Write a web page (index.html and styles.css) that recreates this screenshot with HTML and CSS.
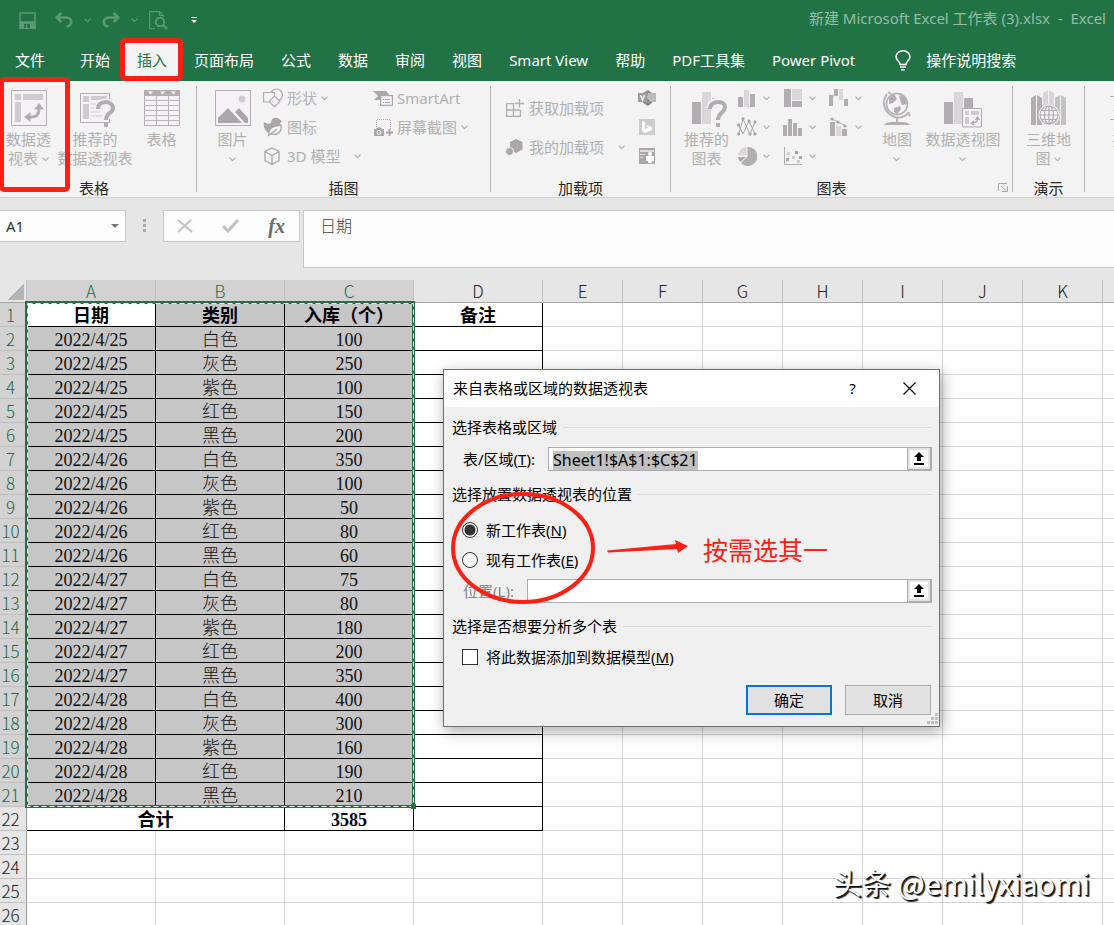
FILE: index.html
```html
<!DOCTYPE html>
<html lang="zh-CN">
<head>
    <meta charset="UTF-8">
    <title>新建 Microsoft Excel 工作表 (3).xlsx - Excel</title>
    <link rel="stylesheet" href="styles.css">
</head>
<body>
<svg class="defs" width="0" height="0">
    <symbol id="chev" viewBox="0 0 7 5"><path d="M.5 .7L3.5 3.7L6.5 .7" fill="none" stroke="currentColor" stroke-width="1.2"/></symbol>
    <symbol id="pick" viewBox="0 0 10 13"><path d="M5 0L10 5H7V9H3V5H0zM0 11H10V13H0z"/></symbol>
</svg>
<div class="titlebar">
    <div class="quick">
        <button aria-label="保存"><svg width="17" height="17" viewBox="0 0 17 17" fill="none" stroke="currentColor" stroke-width="1.5"><path d="M1 1H16V16H1z"/><path d="M1 10H16V16H1z" fill="currentColor"/><path d="M5 12H11V16H5z" fill="#217346" stroke="none"/><path d="M7.500 12.500V16"/></svg></button>
        <button aria-label="撤消"><svg width="18" height="16" viewBox="0 0 18 16" fill="none" stroke="currentColor" stroke-width="2.500"><path d="M6.500 1L1.500 5.500L6.500 10M2 5.500H11C18 5.500 18 14 11.500 14.500"/></svg></button>
        <svg class="chev" width="7" height="5"><use href="#chev"/></svg>
        <button aria-label="恢复"><svg width="18" height="16" viewBox="0 0 18 16" fill="none" stroke="currentColor" stroke-width="2.500"><path d="M11.500 1L16.500 5.500L11.500 10M16 5.500H7C0 5.500 0 14 6.500 14.500"/></svg></button>
        <svg class="chev" width="7" height="5"><use href="#chev"/></svg>
        <button aria-label="打印预览"><svg width="19" height="19" viewBox="0 0 19 19" fill="none" stroke="currentColor" stroke-width="1.200"><path d="M6 17.500H.7V.7H10.500L14.300 4.500V6M10.500 .7V4.500H14.300"/><circle cx="11" cy="11" r="4.200" stroke-width="2"/><path d="M14 14L18 18" stroke-width="2.400"/></svg></button>
        <button class="more" aria-label="自定义"><svg width="6" height="7" viewBox="0 0 6 7" fill="#fff"><path d="M0 0H6V1H0zM0 3H6L3 6z"/></svg></button>
    </div>
    <div class="doc">新建 Microsoft Excel 工作表 (3).xlsx &nbsp;-&nbsp; Excel</div>
</div>
<nav class="tabs">
    <button class="file">文件</button>
    <button>开始</button>
    <button class="on">插入</button>
    <button>页面布局</button>
    <button>公式</button>
    <button>数据</button>
    <button>审阅</button>
    <button>视图</button>
    <button>Smart View</button>
    <button>帮助</button>
    <button>PDF工具集</button>
    <button>Power Pivot</button>
    <button class="tell"><svg width="16" height="21" viewBox="0 0 16 21" fill="none" stroke="#fff" stroke-width="1.500"><path d="M5 14.500C5 11.500 1 10.500 1 6.800A7 6 0 0 1 15 6.800C15 10.500 11 11.500 11 14.500zM5 17H11M6 19.800H10"/></svg>操作说明搜索</button>
</nav>
<div class="ribbon">
    <section class="group g-table">
        <div class="body">
            <button class="big pivot">
                <svg width="36" height="36" viewBox="0 0 36 36"><path d="M.5 .5H35.500V35.500H.5z" fill="#f5f1f6" stroke="#b1adb1"/><path d="M4 4H10V10H4zM12 4H32V10H12zM4 12H10V32H4z" fill="#cfccd0"/><path d="M16.500 27H21C26 27 28 23 28 18" fill="none" stroke="#b1adb1" stroke-width="3"/><path d="M28 13L33 19.500H23zM13 27L19.500 22V32z" fill="#b1adb1"/></svg>
                <span>数据透<br>视表 <svg class="chev" width="7" height="5"><use href="#chev"/></svg></span>
            </button>
            <button class="big wide">
                <svg width="30" height="36" viewBox="0 0 30 36"><path d="M.5 3.500H29.500V32.500H.5z" fill="#f5f1f6" stroke="#b1adb1"/><path d="M3 6H9V12H3zM11 6H27V10H11zM3 14H9V29H3z" fill="#cfccd0"/><path d="M11 14H27M11 18H23M11 22H20M11 26H22" stroke="#cfccd0"/><path d="M18 19C18 10 33 10 33 18C33 24 26 22 26 29" fill="none" stroke="#f3f3f3" stroke-width="7"/><path d="M18 19C18 10 33 10 33 18C33 24 26 22 26 30M26 33V37" fill="none" stroke="#b1adb1" stroke-width="4"/></svg>
                <span>推荐的<br>数据透视表</span>
            </button>
            <button class="big">
                <svg width="36" height="36" viewBox="0 0 36 36"><path d="M.5 .5H35.500V35.500H.5z" fill="#f5f1f6" stroke="#b1adb1"/><path d="M0 0H36V6H0z" fill="#b1adb1"/><path d="M4 1.500H9L6.500 4.500zM16 1.500H21L18.500 4.500zM27 1.500H32L29.500 4.500z" fill="#fff"/><path d="M12.500 6V35M24.500 6V35M0 10.500H36M0 15.500H36M0 20.500H36M0 25.500H36M0 30.500H36" stroke="#b8b4b8" fill="none"/></svg>
                <span>表格</span>
            </button>
        </div>
        <h2>表格</h2>
        <i class="mark mark-pivot"></i>
    </section>
    <section class="group g-pic">
        <div class="body">
            <button class="big">
                <svg width="36" height="36" viewBox="0 0 36 36"><path d="M.5 .5H35.500V35.500H.5z" fill="#f5f1f6" stroke="#b1adb1"/><circle cx="27" cy="9" r="3.500" fill="#cfccd0"/><path d="M3 33V28L13 18L27 33zM20 22L24 18L33 28V33H30z" fill="#aaa6aa"/></svg>
                <span>图片<br><svg class="chev" width="7" height="5"><use href="#chev"/></svg></span>
            </button>
            <div class="list shapes">
                <button><svg width="20" height="20" viewBox="0 0 20 20" fill="#f5f1f6" stroke="#b1adb1" stroke-width="1.200"><circle cx="13.500" cy="7" r="6"/><path d="M.6 4.500H11.500V14H.6z"/><path d="M11.500 8L17 13.500L11.500 19L6 13.500z"/></svg>形状 <svg class="chev" width="7" height="5"><use href="#chev"/></svg></button>
                <button><svg width="20" height="20" viewBox="0 0 20 20" fill="#aaa6aa"><path d="M1 5C4 7 6 7 8 6C8 2 11 0 14 1C16 1 17 3 19 4C17 6 17 8 14 9C9 10 8 15 6 16C2 14 0 10 1 5z"/><path d="M6 18C5 11 10 9 18 8C19 14 15 19 8 17M5 19L14 12" fill="#f5f1f6" stroke="#aaa6aa" stroke-width="1.300"/></svg>图标</button>
                <button><svg width="20" height="20" viewBox="0 0 20 20" fill="#f5f1f6" stroke="#aaa6aa" stroke-width="1.300"><path d="M9 2L16 5.500V14.500L9 18.500L2 14.500V5.500zM2 5.500L9 9.500L16 5.500M9 9.500V18.500"/></svg>3D 模型 <svg class="chev far" width="7" height="5"><use href="#chev"/></svg></button>
            </div>
            <div class="list">
                <button><svg width="20" height="20" viewBox="0 0 20 20"><path d="M0 3H13L17 8H7V12H1L5 8z" fill="#aaa6aa"/><path d="M7.600 7.600H19.400V17.400H7.600z" fill="#f5f1f6" stroke="#aaa6aa" stroke-width="1.200"/><path d="M10 11.500H11M12 11.500H17M10 14.500H11M12 14.500H17" stroke="#aaa6aa"/></svg>SmartArt</button>
                <button><svg width="20" height="20" viewBox="0 0 20 20"><path d="M3.500 10V2.500H17.500V12" fill="#f5f1f6" stroke="#b1adb1" stroke-dasharray="1 1"/><path d="M1 12H3L4 10.500H8L9 12H11V19H1zM15.500 12H17.500V14.500H20V16.500H17.500V19H15.500V16.500H13V14.500H15.500z" fill="#aaa6aa"/><circle cx="6" cy="15.300" r="2" fill="none" stroke="#fff"/></svg>屏幕截图 <svg class="chev" width="7" height="5"><use href="#chev"/></svg></button>
            </div>
        </div>
        <h2>插图</h2>
    </section>
    <section class="group g-addin">
        <div class="body">
            <div class="list addins">
                <button><svg width="20" height="20" viewBox="0 0 20 20" fill="none" stroke="#b1adb1" stroke-width="1.300"><path d="M1.600 5.600H8.500V19M1.600 5.600V18.400H15.400V12M1.600 12H15.400M14.500 1V9.500M10 5.500H19"/></svg>获取加载项</button>
                <button><svg width="20" height="20" viewBox="0 0 20 20" fill="#aaa6aa"><path d="M11 2L17.500 5V12.500L11 16L5 12.500V5z"/><circle cx="4.500" cy="14.500" r="4" stroke="#f3f3f3"/></svg>我的加载项 <svg class="chev far" width="7" height="5"><use href="#chev"/></svg></button>
            </div>
            <div class="list apps">
                <button aria-label="Visio"><svg width="18" height="18" viewBox="0 0 18 18"><path d="M5 4L10 1L14 4V14L10 17L5 14z" fill="#8f8c8f"/><path d="M10 4H18V13H13L9 9z" fill="#bdbabd"/><path d="M0 4H9V13H0z" fill="#a19ea1"/><path d="M2.500 6L4.500 11L6.500 6" fill="none" stroke="#fff" stroke-width="1.300"/></svg></button>
                <button aria-label="Bing"><svg width="18" height="18" viewBox="0 0 18 18"><path d="M1 1H17V17H1z" fill="#cfccd0"/><path d="M4 3L7 4V11L10 10L8 7L14 9V12L7 15L4 13z" fill="#fff"/></svg></button>
                <button aria-label="People"><svg width="18" height="18" viewBox="0 0 18 18"><path d="M1 1H17V17H1z" fill="#aaa6aa"/><path d="M2 3H16V5H2zM2 7H7V8H2zM2 10H5V11H2z" fill="#ddd"/><circle cx="12" cy="7" r="2" fill="#fff"/><path d="M8 9H16V14H14V16H10V14H8z" fill="#fff"/></svg></button>
            </div>
        </div>
        <h2>加载项</h2>
    </section>
    <section class="group g-chart">
        <div class="body">
            <button class="big">
                <svg width="30" height="36" viewBox="0 0 30 36"><path d="M0 12H9V34H0z" fill="#b1adb1"/><path d="M10 2H19V34H10z" fill="#d9d6da"/><path d="M20 8H29V14H20z" fill="#b1adb1"/><path d="M18 18C18 9 33 9 33 17C33 23 26 22 26 29" fill="none" stroke="#f3f3f3" stroke-width="7"/><path d="M18 19C18 10 33 10 33 17C33 23 26 22 26 30M26 33V37" fill="none" stroke="#b1adb1" stroke-width="4"/></svg>
                <span>推荐的<br>图表</span>
            </button>
            <div class="charts">
                <button aria-label="柱形图"><svg width="20" height="20" viewBox="0 0 20 20"><path d="M1 9H6V19H1zM13 6H18V19H13z" fill="#b1adb1"/><path d="M7 2H12V19H7z" fill="#d9d6da"/></svg><svg class="chev" width="7" height="5"><use href="#chev"/></svg></button>
                <button aria-label="层次结构"><svg width="20" height="20" viewBox="0 0 20 20"><path d="M1 1H8V19H1zM9 13H19V19H9z" fill="#b1adb1"/><path d="M9 1H19V12H9z" fill="#d9d6da"/></svg><svg class="chev" width="7" height="5"><use href="#chev"/></svg></button>
                <button aria-label="瀑布图"><svg width="20" height="20" viewBox="0 0 20 20"><path d="M0 7H4V18H0zM5 1H9V8H5zM15 11H19V18H15z" fill="#b1adb1"/><path d="M10 1H14V12H10zM4 7H5V9H4z" fill="#d9d6da"/></svg><svg class="chev" width="7" height="5"><use href="#chev"/></svg></button>
                <button aria-label="折线图"><svg width="20" height="20" viewBox="0 0 20 20" fill="#aaa6aa" stroke="#aaa6aa"><path d="M1.500 18L6 2L13 17L18 5M1.500 8L6 17L12 4L18 17" fill="none"/><circle cx="1.500" cy="8" r="1.200"/><circle cx="6" cy="2" r="1.200"/><circle cx="18" cy="5" r="1.200"/><circle cx="12" cy="4" r="1.200"/><circle cx="1.500" cy="17" r="1.200"/><circle cx="13" cy="17" r="1.200"/><circle cx="18" cy="17" r="1.200"/></svg><svg class="chev" width="7" height="5"><use href="#chev"/></svg></button>
                <button aria-label="统计图"><svg width="20" height="20" viewBox="0 0 20 20"><path d="M0 8H4V19H0zM5 2H9V19H5zM10 6H14V19H10zM15 11H19V19H15z" fill="#b1adb1"/></svg><svg class="chev" width="7" height="5"><use href="#chev"/></svg></button>
                <button aria-label="组合图"><svg width="20" height="20" viewBox="0 0 20 20"><path d="M1 5H6V19H1zM13 12H18V19H13z" fill="#b1adb1"/><path d="M7 9H12V19H7z" fill="#d9d6da"/><path d="M3 2L9 5L17 9" fill="none" stroke="#aaa6aa"/><circle cx="3" cy="2" r="1.600" fill="#aaa6aa"/><circle cx="9" cy="5" r="1.600" fill="#aaa6aa"/><circle cx="16" cy="9" r="1.600" fill="#aaa6aa"/></svg><svg class="chev" width="7" height="5"><use href="#chev"/></svg></button>
                <button aria-label="饼图"><svg width="20" height="20" viewBox="0 0 20 20"><path d="M10.500 1A9.500 9.500 0 1 1 4 17L10.500 10.500z" fill="#b1adb1"/><path d="M9.500 1V9.500H1A9 9 0 0 1 9.500 1z" fill="#d9d6da"/><path d="M1 11H9L3.500 16A8 8 0 0 1 1 11z" fill="#aaa6aa"/></svg><svg class="chev" width="7" height="5"><use href="#chev"/></svg></button>
                <button aria-label="散点图"><svg width="20" height="20" viewBox="0 0 20 20"><path d="M1.500 1V18.500H19" fill="none" stroke="#b1adb1"/><path d="M12 5H15V8H12zM16 10H19V13H16zM3 12H6V15H3z" fill="#aaa6aa"/><path d="M4 6H7V9H4zM9 10H12V13H9zM14 14H17V17H14z" fill="#d0cdd1"/></svg><svg class="chev" width="7" height="5"><use href="#chev"/></svg></button>
            </div>
            <button class="big map">
                <svg width="30" height="36" viewBox="0 0 30 36"><circle cx="15" cy="14" r="10.500" fill="#f5f1f6" stroke="#b1adb1" stroke-width="1.500"/><path d="M7 8L12 4L15 9L11 13L7 14zM17 5L23 7L25 14L20 15L18 10zM12 18L18 16L19 19L15 24L12 22z" fill="#b1adb1"/><path d="M6 2L9 4M5 4C-1 12 2 24 14 27.500C20 28 24 26 26 23M26 22L28 26M15 28V32" fill="none" stroke="#b8b4b8" stroke-width="2"/><path d="M2 35Q4 32 10 32H20Q26 32 28 35z" fill="#b1adb1"/></svg>
                <span>地图<br><svg class="chev" width="7" height="5"><use href="#chev"/></svg></span>
            </button>
            <button class="big wide">
                <svg width="38" height="36" viewBox="0 0 38 36"><path d="M0 12H9V34H0zM20 8H29V18H20z" fill="#b1adb1"/><path d="M10 2H19V34H10z" fill="#d9d6da"/><path d="M18.500 18.500H37.500V37H18.500z" fill="#f5f1f6" stroke="#b1adb1"/><path d="M21 21H25V25H21zM27 21H35V25H27zM21 27H25V34H21z" fill="#cfccd0"/><path d="M28 33Q34 33 33.500 28M31.500 30L33.500 27L35.500 30M30 31L27.500 33L30 35" fill="none" stroke="#aaa6aa" stroke-width="1.300"/></svg>
                <span>数据透视图<br><svg class="chev" width="7" height="5"><use href="#chev"/></svg></span>
            </button>
        </div>
        <h2>图表</h2>
        <button class="launch" aria-label="查看所有图表"><svg width="10" height="9" viewBox="0 0 10 9" fill="none" stroke="#a5a5a5"><path d="M.5 8V.5H9M3 3L8 7.500M9.500 3V8.500H4"/></svg></button>
    </section>
    <section class="group g-demo">
        <div class="body">
            <button class="big">
                <svg width="36" height="36" viewBox="0 0 36 36"><path d="M0 8L5 5V35H0zM6 5L11 8V35H6z" fill="#b1adb1"/><path d="M12 3L17 0V35H12zM18 0L23 3V35H18z" fill="#d9d6da"/><path d="M24 8L29 5V35H24zM30 5L35 8V35H30z" fill="#c4c1c5"/><circle cx="18" cy="25" r="10.500" fill="#f5f1f6"/><g fill="none" stroke="#b1adb1" stroke-width="1.200"><circle cx="18" cy="25" r="9"/><ellipse cx="18" cy="25" rx="4.500" ry="9"/><path d="M18 16V34M9 25H27M10.500 20.500H25.500M10.500 29.500H25.500"/></g></svg>
                <span>三维地<br>图 <svg class="chev" width="7" height="5"><use href="#chev"/></svg></span>
            </button>
        </div>
        <h2>演示</h2>
    </section>
    <section class="group g-spark">
        <div class="body">
            <button class="big">
                <svg width="36" height="36" viewBox="0 0 36 36" fill="none" stroke="#b1adb1"><path d="M4.500 1V35M0 6.500H36M0 29.500H36"/><path d="M4 20L10 25L17 14L24 22L33 10" stroke-width="2"/></svg>
                <span>折线</span>
            </button>
        </div>
    </section>
</div>
<div class="formula">
    <label class="namebox"><input type="text" value="A1" aria-label="名称框"><svg width="8" height="4" viewBox="0 0 8 4"><path d="M0 0H8L4 4z" fill="#777"/></svg></label>
    <svg class="dots" width="3" height="13" viewBox="0 0 3 13"><path d="M0 0H3V3H0zM0 5H3V8H0zM0 10H3V13H0z" fill="#a9a9a9"/></svg>
    <div class="fx">
        <button aria-label="取消"><svg width="16" height="14" viewBox="0 0 16 14" fill="none" stroke="#c2c2c2" stroke-width="2"><path d="M1 1L15 13M14 1L1 13"/></svg></button>
        <button aria-label="输入"><svg width="17" height="14" viewBox="0 0 17 14" fill="none" stroke="#c2c2c2" stroke-width="3"><path d="M1 7L6 12L16 1"/></svg></button>
        <button class="fn" aria-label="插入函数">fx</button>
    </div>
    <textarea aria-label="编辑栏">日期</textarea>
</div>
<div class="sheet">
    <div class="area">
        <table id="grid"></table>
        <svg class="ants" width="391" height="508" viewBox="0 0 391 508" fill="none">
            <path d="M1.500 1.500H388.500V505.500H1.500z" stroke="#217346" stroke-width="3"/>
            <path d="M2.500 2.500H388.500V505.500H2.500z" stroke="#fff" stroke-dasharray="5 3"/>
            <path d="M386 503H391V508H386z" fill="#217346"/>
        </svg>
    </div>
</div>
<form class="dialog">
    <header>
        <span>来自表格或区域的数据透视表</span>
        <button type="button" aria-label="帮助">?</button>
        <button type="button" aria-label="关闭"><svg width="13" height="13" viewBox="0 0 13 13" stroke="#000" stroke-width="1.200"><path d="M.5 .5L12.500 12.500M12.500 .5L.5 12.500"/></svg></button>
    </header>
    <div class="content">
        <h3>选择表格或区域</h3>
        <div class="field">
            <label for="range">表/区域(<u>T</u>):</label>
            <input type="text" id="range" value="Sheet1!$A$1:$C$21">
            <button type="button" aria-label="选择区域"><svg width="10" height="13"><use href="#pick"/></svg></button>
        </div>
        <h3>选择放置数据透视表的位置</h3>
        <label class="opt"><input type="radio" name="place" checked>新工作表(<u>N</u>)</label>
        <label class="opt"><input type="radio" name="place">现有工作表(<u>E</u>)</label>
        <div class="field off">
            <label for="place">位置(<u>L</u>):</label>
            <input type="text" id="place">
            <button type="button" aria-label="选择位置"><svg width="10" height="13"><use href="#pick"/></svg></button>
        </div>
        <h3>选择是否想要分析多个表</h3>
        <label class="opt"><input type="checkbox">将此数据添加到数据模型(<u>M</u>)</label>
        <div class="btns">
            <button type="submit" class="ok">确定</button>
            <button type="button">取消</button>
        </div>
    </div>
    <svg class="grip" width="11" height="11" viewBox="0 0 11 11" fill="#bfbfbf"><path d="M8 0H11V3H8zM4 4H7V7H4zM8 4H11V7H8zM0 8H3V11H0zM4 8H7V11H4zM8 8H11V11H8z"/></svg>
    <svg class="draw" width="240" height="116" viewBox="0 0 240 116">
        <ellipse cx="73" cy="58" rx="70" ry="54" fill="none" stroke="#ff2013" stroke-width="4"/>
        <path d="M157 60.500L226 54L225 50L238 56L228 63L227 59L158 62.500z" fill="#ff2013"/>
    </svg>
    <span class="note">按需选其一</span>
</form>
<div class="sign">头条 @emilyxiaomi</div>
<script src="script.js"></script>
</body>
</html>
```
FILE: styles.css
```css
*{
    margin: 0;
    padding: 0;
    box-sizing: border-box;
}
body{
    position: relative;
    display: flex;
    flex-direction: column;
    height: 100vh;
    overflow: hidden;
    font: 15px/19px "Noto Sans", "Noto Sans CJK SC", sans-serif;
    background: #e6e6e6;
}
button,input,textarea{
    font: inherit;
    color: inherit;
    border: 0;
    background: none;
    outline: none;
}
.defs{
    position: absolute;
}
.titlebar{
    flex: none;
    display: flex;
    justify-content: space-between;
    align-items: center;
    height: 40px;
    padding: 0 8px 0 19px;
    background: #217346;
    color: #5b9877;
}
.quick{
    display: flex;
    align-items: center;
    gap: 11px;
}
.quick button{
    display: flex;
}
.quick button:first-child{
    margin-right: 8px;
}
.quick .more{
    margin-left: 12px;
}
.doc{
    padding-bottom: 3px;
    color: #95bda5;
    white-space: nowrap;
}
.tabs{
    flex: none;
    display: flex;
    gap: 3px;
    height: 41px;
    padding: 3px 0 0 3px;
    background: #217346;
    color: #fff;
}
.tabs button{
    flex: none;
    padding: 0 12px 3px;
    white-space: nowrap;
}
.tabs .file{
    margin-right: 8px;
}
.tabs .on{
    position: relative;
    background: #f3f3f3;
    color: #217346;
}
.tabs .on::after,.mark{
    content: "";
    position: absolute;
    border: 5px solid #ff2013;
    border-radius: 5px;
}
.tabs .on::after{
    left: -5px;
    right: -4px;
    top: -5px;
    bottom: 0;
}
.tabs .tell{
    display: flex;
    align-items: center;
    gap: 15px;
    margin-left: 13px;
}
.ribbon{
    flex: none;
    display: flex;
    height: 117px;
    padding: 5px 0;
    background: #f3f3f3;
    border-bottom: 1px solid #d2d2d2;
    color: #b1b1b1;
}
.group{
    position: relative;
    flex: none;
    display: flex;
    flex-direction: column;
    border-right: 1px solid #b4b4b4;
}
.g-table{ width: 197px; }
.g-pic{ width: 294px; }
.g-addin{ width: 180px; }
.g-chart{ width: 342px; }
.g-demo{ width: 72px; }
.g-spark{ border: 0; padding-left: 14px; }
.group h2{
    font-size: 15px;
    line-height: 20px;
    font-weight: normal;
    text-align: center;
    color: #262626;
}
.g-table h2{
    padding-right: 8px;
}
.g-chart h2{
    padding-right: 20px;
}
.body{
    flex: none;
    display: flex;
    height: 88px;
    margin-bottom: 2px;
}
.group h2{
    padding-top: 2px;
}
.big{
    flex: none;
    display: flex;
    flex-direction: column;
    align-items: center;
    gap: 4px;
    width: 57px;
    padding-top: 4px;
    white-space: nowrap;
}
.big > svg{
    overflow: visible;
}
.wide{
    width: 76px;
}
.chev{
    flex: none;
    color: #b1b1b1;
    vertical-align: middle;
}
.titlebar .chev{
    color: inherit;
}
.mark-pivot{
    left: -1px;
    top: -9px;
    width: 71px;
    height: 115px;
    z-index: 1;
}
.list{
    display: flex;
    flex-direction: column;
    gap: 5px;
}
.list button{
    display: flex;
    align-items: center;
    gap: 4px;
    height: 24px;
    white-space: nowrap;
}
.list .far{
    margin-left: 10px;
}
.g-pic .body{
    padding-left: 7px;
}
.shapes{
    width: 110px;
}
.addins{
    gap: 15px;
    width: 133px;
    padding-top: 10px;
}
.g-addin .body{
    padding-left: 14px;
}
.g-pic .big{
    margin-right: 2px;
}
.g-chart .body{
    padding-left: 7px;
}
.charts{
    display: grid;
    grid-template-columns: repeat(3, 46px);
    grid-auto-rows: 24px;
    row-gap: 5px;
    margin: 0 1px 0 2px;
    align-self: flex-start;
}
.map{
    width: 42px;
    margin-right: 6px;
}
.g-chart .wide{
    margin-left: 1px;
}
.charts button{
    display: flex;
    align-items: center;
    gap: 6px;
}
.g-demo .big{
    margin: 0 auto;
}
.launch{
    position: absolute;
    right: 4px;
    bottom: 0;
    display: flex;
}
.formula{
    flex: none;
    display: flex;
    align-items: flex-start;
    height: 82px;
    padding-top: 12px;
}
.namebox,.fx{
    display: flex;
    align-items: center;
    height: 32px;
    border: 1px solid #c6c6c6;
    background: #fdfdfd;
}
.namebox{
    width: 127px;
    margin-left: -1px;
    padding: 0 6px;
    color: #333;
}
.namebox input{
    width: 105px;
}
.namebox svg{
    flex: none;
}
.dots{
    margin: 9px 17px 0 17px;
}
.fx{
    width: 137px;
    justify-content: space-between;
    padding: 0 14px 0 13px;
    margin-right: 3px;
}
.fx button{
    display: flex;
}
.fx .fn{
    font: italic bold 20px/24px "Liberation Serif", serif;
    color: #6b6b6b;
}
.formula textarea{
    flex: 1;
    height: 58px;
    padding: 4px 16px;
    border: 1px solid #c6c6c6;
    border-right: 0;
    background: #fdfdfd;
    font: 300 16px/20px "Noto Sans CJK SC", sans-serif;
    color: #444;
    resize: none;
}
.sheet{
    flex: 1;
    overflow: hidden;
    background: #fff;
}
.area{
    position: relative;
}
#grid{
    table-layout: fixed;
    border-collapse: separate;
    border-spacing: 0;
    width: 0;
}
#grid th,#grid td{
    height: 24px;
    border-right: 1px solid #d4d4d4;
    border-bottom: 1px solid #d4d4d4;
    text-align: center;
    white-space: nowrap;
}
#grid th{
    background: #e6e6e6;
    font: 300 17px/22px "Noto Sans CJK SC", sans-serif;
    color: #222;
    border-bottom-color: #c0c0c0;
}
#grid thead th{
    height: 23px;
    border-right-color: #c0c0c0;
    border-bottom-color: #a6a6a6;
}
#grid tbody th{
    border-right-color: #9b9b9b;
    padding-right: 5px;
}
#grid .sel{
    background: #d2d2d2;
    color: #1e6a42;
}
#grid .corner{
    background: linear-gradient(135deg, #e6e6e6 50%, #b4b4b4 50%) 8px 4px / 16px 16px no-repeat #e6e6e6;
}
#grid td{
    padding-top: 3px;
    font: 18px/20px "Liberation Serif", "Noto Sans CJK SC", serif;
    font-weight: 300;
    color: #111;
}
#grid .line{
    border-color: #000;
}
#grid .picked{
    background: #c6c6c6;
}
#grid .bold{
    font-weight: bold;
    color: #000;
}
.ants{
    position: absolute;
    left: 25px;
    top: 21px;
}
.dialog{
    position: absolute;
    left: 443px;
    top: 369px;
    width: 497px;
    border: 1px solid #707070;
    background: #f0f0f0;
    box-shadow: 2px 4px 14px rgba(0,0,0,.35);
    color: #000;
}
.dialog header{
    display: flex;
    align-items: center;
    height: 37px;
    padding: 0 1px 0 9px;
    background: #fff;
}
.dialog header span{
    flex: 1;
}
.dialog header button{
    display: flex;
    align-items: center;
    justify-content: center;
    width: 57px;
    height: 36px;
}
.content{
    padding: 10px 7px 11px 8px;
}
.dialog h3{
    display: flex;
    align-items: center;
    gap: 6px;
    font-size: 15px;
    line-height: 20px;
    font-weight: normal;
}
.dialog h3::after{
    content: "";
    flex: 1;
    height: 1px;
    background: #dcdcdc;
}
.field{
    display: flex;
    height: 24px;
    margin: 10px 0 13px 11px;
}
.field label{
    margin-right: 13px;
    line-height: 24px;
}
.field input{
    flex: 1;
    min-width: 0;
    padding: 2px 4px 0;
    border: 1px solid #abadb3;
    border-right: 0;
    background: #fff;
    font-size: 16px;
}
#range::selection{
    background: #c0c0c0;
    color: #000;
}
.field button{
    display: flex;
    align-items: center;
    justify-content: center;
    width: 25px;
    border: 1px solid #abadb3;
    border-right-width: 2px;
    border-bottom-width: 2px;
    background: #fff;
    box-shadow: inset 0 0 0 2px #e3e3e3;
}
.off label{
    color: #838383;
}
.opt{
    display: flex;
    align-items: center;
    height: 30px;
    margin-left: 10px;
}
.opt input{
    appearance: none;
    width: 16px;
    height: 16px;
    margin-right: 8px;
    border: 1px solid #333;
    background: #fff;
}
.opt input[type=radio]{
    border-radius: 50%;
}
.opt input[type=radio]:checked{
    background: radial-gradient(circle, #333 5px, #fff 6px);
}
h3 + .opt{
    margin-top: 11px;
}
.opt + .off{
    margin-top: 4px;
    margin-bottom: 13px;
}
h3 + .opt:has([type=checkbox]){
    margin-top: 6px;
}
.btns{
    display: flex;
    justify-content: flex-end;
    gap: 13px;
    margin: 13px 1px 0 0;
}
.btns button{
    width: 86px;
    height: 30px;
    border: 1px solid #adadad;
    background: #e1e1e1;
}
.btns .ok{
    border: 2px solid #0078d7;
}
.grip{
    position: absolute;
    right: 1px;
    bottom: 2px;
}
.draw{
    position: absolute;
    left: 6px;
    top: 120px;
}
.note{
    position: absolute;
    left: 259px;
    top: 164px;
    font-size: 25px;
    line-height: 32px;
    color: #ff2013;
}
.sign{
    position: absolute;
    right: 24px;
    bottom: 25px;
    font: 29px/36px "Noto Sans CJK SC", sans-serif;
    color: #fff;
    text-shadow: 1px 1px 1px #000, 2px 2px 1px #333;
}
```
FILE: script.js
```javascript
var days = ['2022/4/25', '2022/4/26', '2022/4/27', '2022/4/28'];
var kinds = ['白色', '灰色', '紫色', '红色', '黑色'];
var counts = [100, 250, 100, 150, 200, 350, 100, 50, 80, 60, 75, 80, 180, 200, 350, 400, 300, 160, 190, 210];
var letters = 'ABCDEFGHIJKLMNOPQRSTUVWXYZ';
var rows = 60;
var html = '<colgroup><col style="width:27px">';
for (var c = 0; c < letters.length; c++) {
    html += '<col style="width:' + (c < 4 ? 129 : 80) + 'px">';
}
html += '</colgroup><thead><tr><th class="corner"></th>';
for (c = 0; c < letters.length; c++) {
    html += '<th' + (c < 3 ? ' class="sel"' : '') + '>' + letters[c] + '</th>';
}
html += '</tr></thead><tbody>';

function cell(text, cls, span) {
    return '<td class="' + cls + '"' + (span ? ' colspan="2"' : '') + '>' + text + '</td>';
}

for (var r = 1; r <= rows; r++) {
    html += '<tr><th' + (r < 22 ? ' class="sel"' : '') + '>' + r + '</th>';
    if (r === 1) {
        html += cell('日期', 'line bold') + cell('类别', 'line bold picked') + cell('入库（个）', 'line bold picked') + cell('备注', 'line bold');
    } else if (r < 22) {
        var i = r - 2;
        html += cell(days[Math.floor(i / 5)], 'line picked') + cell(kinds[i % 5], 'line picked') + cell(counts[i], 'line picked') + cell('', 'line');
    } else if (r === 22) {
        html += cell('合计', 'line bold', true) + cell('3585', 'line bold') + cell('', 'line');
    } else {
        html += '<td></td><td></td><td></td><td></td>';
    }
    for (c = 4; c < letters.length; c++) {
        html += '<td></td>';
    }
    html += '</tr>';
}
document.getElementById('grid').innerHTML = html + '</tbody>';

var range = document.getElementById('range');
range.focus();
range.select();
```
